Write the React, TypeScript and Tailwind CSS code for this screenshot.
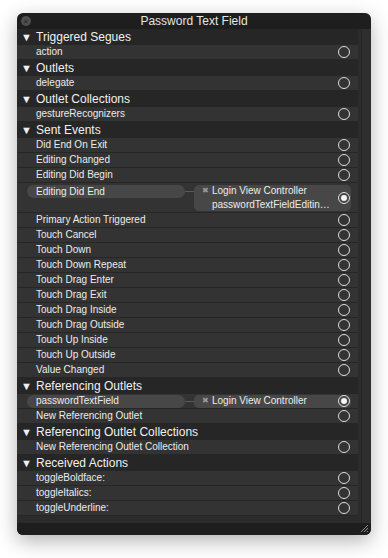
import type { ReactNode } from 'react';

type Item =
  | { kind: 'plain'; label: string }
  | { kind: 'link'; label: string; target: string; method?: string };

interface Section {
  title: string;
  items: Item[];
}

const p = (label: string): Item => ({ kind: 'plain', label });

const sections: Section[] = [
  { title: 'Triggered Segues', items: [p('action')] },
  { title: 'Outlets', items: [p('delegate')] },
  { title: 'Outlet Collections', items: [p('gestureRecognizers')] },
  {
    title: 'Sent Events',
    items: [
      p('Did End On Exit'),
      p('Editing Changed'),
      p('Editing Did Begin'),
      { kind: 'link', label: 'Editing Did End', target: 'Login View Controller', method: 'passwordTextFieldEditin…' },
      p('Primary Action Triggered'),
      p('Touch Cancel'),
      p('Touch Down'),
      p('Touch Down Repeat'),
      p('Touch Drag Enter'),
      p('Touch Drag Exit'),
      p('Touch Drag Inside'),
      p('Touch Drag Outside'),
      p('Touch Up Inside'),
      p('Touch Up Outside'),
      p('Value Changed'),
    ],
  },
  {
    title: 'Referencing Outlets',
    items: [
      { kind: 'link', label: 'passwordTextField', target: 'Login View Controller' },
      p('New Referencing Outlet'),
    ],
  },
  { title: 'Referencing Outlet Collections', items: [p('New Referencing Outlet Collection')] },
  { title: 'Received Actions', items: [p('toggleBoldface:'), p('toggleItalics:'), p('toggleUnderline:')] },
];

function Circle({ filled }: { filled?: boolean }) {
  return (
    <div className="absolute left-[321px] top-1/2 -translate-y-1/2 w-[12px] h-[12px] rounded-full border-[1.5px] border-[#dcdcdc] flex items-center justify-center">
      {filled && <div className="w-[6px] h-[6px] rounded-full bg-[#f4f4f4]" />}
    </div>
  );
}

function Header({ children }: { children: ReactNode }) {
  return (
    <div className="h-[16px] flex items-center bg-[#262626] text-[12px] leading-none text-[#f0f0f0]">
      <span className="w-[19px] pl-[4px] text-[11px]">▼</span>
      <span>{children}</span>
    </div>
  );
}

function PlainRow({ label }: { label: string }) {
  return (
    <div className="relative h-[15px] flex items-center bg-[#333333] border-b border-[#262626] pl-[19px] text-[10px] leading-none text-[#ececec]">
      <span>{label}</span>
      <Circle />
    </div>
  );
}

function LinkRow({ label, target, method }: { label: string; target: string; method?: string }) {
  return (
    <div
      className={
        'relative flex bg-[#333333] border-b border-[#262626] text-[10px] leading-none text-[#ececec] ' +
        (method ? 'h-[30px] pt-[2px]' : 'h-[15px] items-center')
      }
    >
      <div className="ml-[10px] w-[158px] h-[13px] rounded-full bg-[#474747] flex items-center pl-[9px]">
        {label}
      </div>
      <div className={'w-[9px] h-px bg-[#5a5a5a] ' + (method ? 'mt-[6px]' : 'self-center')} />
      <div
        className={
          'w-[157px] rounded-[5px] bg-[#474747] pl-[8px] ' +
          (method ? 'h-[26px] flex flex-col justify-center gap-[4px]' : 'h-[13px] flex items-center')
        }
      >
        <div className="flex items-center">
          <span className="w-[10px] text-[8px] text-[#9a9a9a]">✖</span>
          <span>{target}</span>
        </div>
        {method && <div className="pl-[10px]">{method}</div>}
      </div>
      <Circle filled />
    </div>
  );
}

export default function App() {
  return (
    <div className="min-h-screen bg-white pt-[13px] pl-[17px]" style={{ fontFamily: '"Liberation Sans", Arial, sans-serif' }}>
      <div className="w-[354px] h-[522px] rounded-[6px] overflow-hidden bg-[#1e1e1e] flex flex-col shadow-[0_6px_20px_rgba(0,0,0,0.3)]">
        {/* title bar */}
        <div className="relative h-[16px] flex items-center justify-center text-[12px] leading-none text-[#e4e4e4]">
          <div className="absolute left-[4px] top-[3px] w-[10px] h-[10px] rounded-full bg-[#4f4f4f] flex items-center justify-center text-[7px] text-[#2a2a2a]">
            ✕
          </div>
          Password Text Field
        </div>

        {/* body */}
        <div className="flex h-[494px]">
          <div className="w-[341px] flex flex-col bg-[#2b2b2b]">
            {sections.map((s) => (
              <div key={s.title}>
                <Header>{s.title}</Header>
                {s.items.map((it) =>
                  it.kind === 'plain' ? (
                    <PlainRow key={it.label} label={it.label} />
                  ) : (
                    <LinkRow key={it.label} label={it.label} target={it.target} method={it.method} />
                  )
                )}
              </div>
            ))}
          </div>
          <div className="w-[3px] bg-[#2b2b2b]" />
          <div className="flex-1 bg-[#2e2e2e] border-l border-[#262626]" />
        </div>

        {/* bottom bar */}
        <div className="relative flex-1 bg-[#1e1e1e]">
          <svg className="absolute right-[2px] bottom-[2px]" width="9" height="9" viewBox="0 0 9 9">
            <path d="M1 8 L8 1 M4 8 L8 4 M7 8 L8 7" stroke="#8a8a8a" strokeWidth="1" />
          </svg>
        </div>
      </div>
    </div>
  );
}
